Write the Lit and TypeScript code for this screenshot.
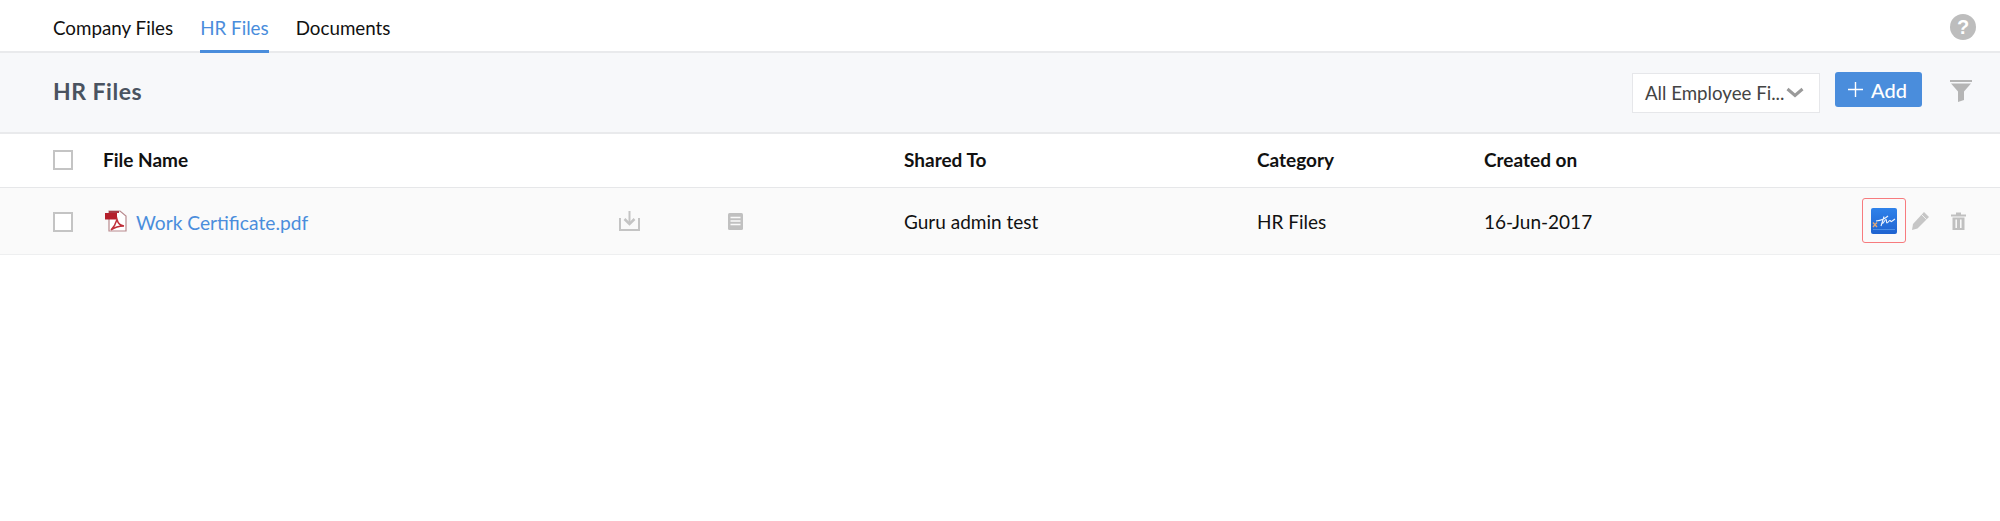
import { LitElement, html, css } from "lit";
import { customElement } from "lit/decorators.js";

@customElement("app-root")
export class AppRoot extends LitElement {
  static styles = css`
    :host { display: block; width: 2000px; height: 521px; overflow: hidden; background: #fff; font-family: Lato, "Liberation Sans", sans-serif; color: #111; }
    .tabs { height: 51px; display: flex; align-items: stretch; padding: 0 24px 0 53px; gap: 27px; border-bottom: 2px solid #e9eaec; }
    .tab { font-size: 18.8px; line-height: 55px; height: 53px; color: #111; box-sizing: border-box; }
    .tab.active { color: #4a8ddc; border-bottom: 3px solid #4a8ddc; }
    .help { margin-left: auto; align-self: center; margin-top: 3px; width: 26px; height: 26px; border-radius: 50%; background: #bdbdbd; color: #fff; font: bold 20px/26px "Liberation Sans", sans-serif; text-align: center; }
    .bar { background: #f7f8fa; border-bottom: 2px solid #e9eaec; display: flex; align-items: center; padding: 0 28px 0 53px; height: 79px; }
    .title { font-size: 23px; letter-spacing: 0.5px; font-weight: 700; color: #4a5360; flex: 1; margin-top: -4px; }
    .select { width: 188px; height: 40px; box-sizing: border-box; background: #fff; border: 1px solid #e6e7ea; display: flex; align-items: center; padding-left: 12px; gap: 2px; font-size: 18.7px; color: #444; white-space: nowrap; }
    .add { margin-left: 15px; width: 87px; height: 35px; box-sizing: border-box; padding-left: 13px; background: #4a8ddc; border-radius: 3px; color: #fff; display: flex; align-items: center; gap: 8px; font-size: 20px; font-weight: 500; margin-top: -6px; }
    .funnel { margin-left: 28px; display: block; margin-top: -3px; }
    .row { display: grid; grid-template-columns: 50px 516px 109px 176px 353px 227px 1fr; align-items: center; padding-left: 53px; font-size: 19px; position: relative; }
    .head { height: 54px; padding-bottom: 2px; border-bottom: 1px solid #e6e7e9; font-weight: 700; font-size: 19px; color: #111; box-sizing: border-box; }
    .body { height: 67px; background: #fafafa; border-bottom: 1px solid #eeeff0; box-sizing: border-box; }
    .check { width: 20px; height: 20px; box-sizing: border-box; border: 2px solid #c4c4c4; background: #fff; }
    .body .check { margin-top: 1px; }
    .file { display: flex; align-items: center; gap: 9px; color: #4a8ddc; font-size: 19.2px; padding-left: 2px; }
    .file span { margin-top: 3px; }
    .icons { position: absolute; left: 1862px; top: 10px; display: flex; align-items: center; }
    .sign { width: 44px; height: 45px; box-sizing: border-box; border: 1px solid #f77b7e; border-radius: 3px; display: flex; align-items: center; justify-content: center; }
    .pencil { margin-left: 5px; }
    .trash { margin-left: 22px; }
    svg { display: block; }
  `;

  render() {
    return html`
      <div class="tabs">
        <div class="tab">Company Files</div>
        <div class="tab active">HR Files</div>
        <div class="tab">Documents</div>
        <div class="help">?</div>
      </div>
      <div class="bar">
        <div class="title">HR Files</div>
        <div class="select">
          <span>All Employee Fi...</span>
          <svg width="18" height="11" viewBox="0 0 18 11"><path d="M1.500 2l7.500 6.500L16.500 2" fill="none" stroke="#9a9a9a" stroke-width="3"/></svg>
        </div>
        <div class="add">
          <svg width="15" height="15" viewBox="0 0 15 15"><path d="M7.500 0v15M0 7.500h15" stroke="#fff" stroke-width="1.400"/></svg>
          <span>Add</span>
        </div>
        <svg class="funnel" width="22" height="22" viewBox="0 0 22 22"><path d="M0 0h22v2H0z" fill="#b5b5b5"/><path d="M1 3.500h20l-7 8V20l-6 2V11.500z" fill="#b5b5b5"/></svg>
      </div>
      <div class="row head">
        <div class="check"></div>
        <div>File Name</div><div></div><div></div>
        <div>Shared To</div>
        <div>Category</div>
        <div>Created on</div>
      </div>
      <div class="row body">
        <div class="check"></div>
        <div class="file">
          <svg width="22" height="22" viewBox="0 0 22 22">
            <path d="M4 1h11l6 5v15H4z" fill="#fff" stroke="#b88a8e" stroke-width="1.200"/>
            <path d="M0 3h12v6.500H0z" fill="#b5202c"/>
            <path d="M4 1h10v2H4z" fill="#a83a44"/>
            <path d="M6 20c3-3 5-7 6-10.500 1 4 3 6 7 6.500-4 0-9 1-13 4z" fill="none" stroke="#c0303a" stroke-width="1.500"/>
          </svg>
          <span>Work Certificate.pdf</span>
        </div>
        <div>
          <svg width="21" height="20" viewBox="0 0 21 20" fill="none" stroke="#c4c4c4" stroke-width="2"><path d="M1 7v12h19V7"/><path d="M10.500 0v12"/><path d="M5.500 8l5 5 5-5" stroke-width="2.500"/></svg>
        </div>
        <div>
          <svg width="15" height="18" viewBox="0 0 15 18"><rect y="1" width="15" height="17" rx="1.500" fill="#c0c0c0"/><path d="M2.500 5.500h10M2.500 9h10M2.500 12.500h10" stroke="#fafafa" stroke-width="1.300"/></svg>
        </div>
        <div>Guru admin test</div>
        <div>HR Files</div>
        <div>16-Jun-2017</div>
        <div class="icons">
          <div class="sign">
            <svg width="26" height="26" viewBox="0 0 26 26">
              <defs><linearGradient id="g" x1="0" y1="0" x2="0" y2="1"><stop offset="0" stop-color="#2f82ea"/><stop offset="1" stop-color="#1f63d0"/></linearGradient></defs>
              <rect width="26" height="26" rx="2" fill="url(#g)"/>
              <path d="M5 13c4-.5 9-2 12-5M13 8.500l-3 9.500M11.500 15.500c1.500-1 2.500-4 3.500-4s0 3.500 1 3.500 2-2.500 3-2.500 .5 1.500 1.500 1 2-1.500 3.500-2.500" fill="none" stroke="#eef4fd" stroke-width="1.100"/>
              <path d="M2 14.500l4 4.500M6 14.500l-4 4.500" stroke="#e0a878" stroke-width="1.400"/>
              <path d="M2 21.500h22" stroke="#4c8fe6" stroke-width="1"/>
            </svg>
          </div>
          <svg class="pencil" width="18" height="18" viewBox="0 0 18 18"><path d="M13 0l5 5L6.500 16.500 1 18l1-6z" fill="#c6c6c6"/><path d="M10.500 2.500l5 5" stroke="#fafafa" stroke-width=".8"/></svg>
          <svg class="trash" width="15" height="18" viewBox="0 0 15 18"><path d="M0 2.500h15v2H0zM5 .5h5v2H5z" fill="#c0c0c0"/><path d="M1.500 5.500h12V18h-12z" fill="#c0c0c0"/><path d="M5.200 7.500v8.500M9.800 7.500v8.500" stroke="#fafafa" stroke-width="1.500"/></svg>
        </div>
      </div>
    `;
  }
}
